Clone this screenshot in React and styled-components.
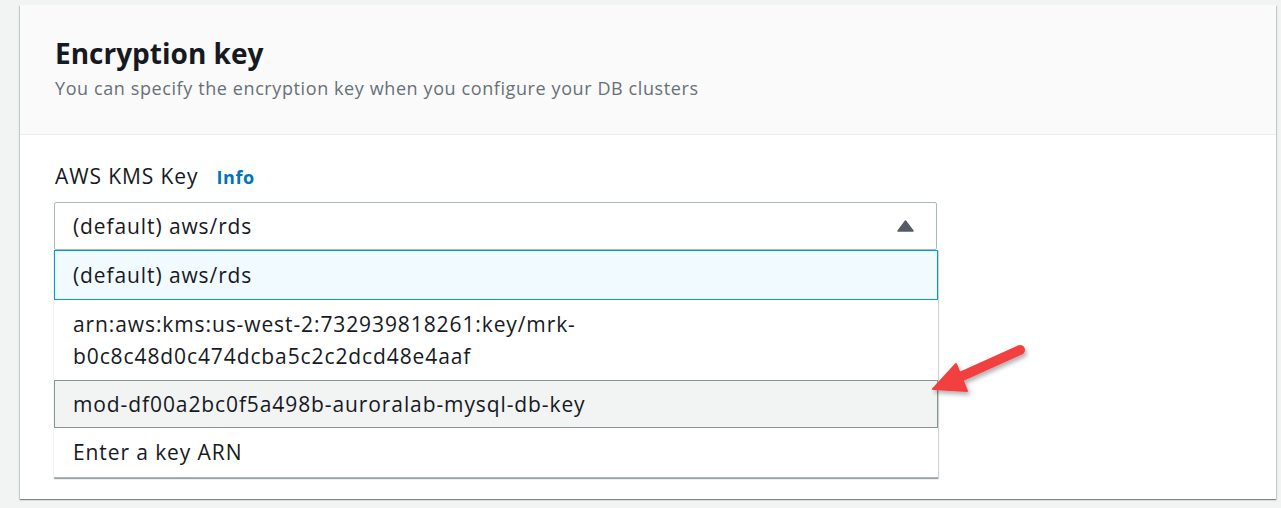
import React from 'react';
import styled, { createGlobalStyle } from 'styled-components';

const GlobalStyle = createGlobalStyle`
    html, body {
        margin: 0;
        padding: 0;
        background: #f2f3f3;
        font-family: "Open Sans", "Noto Sans", Arial, sans-serif;
        color: #16191f;
    }
`

const Page = styled.div`
    position: relative;
    padding: 5px 5px 9px 20px;
`

const Card = styled.div`
    background: white;
    box-shadow: 0 1px 1px 0 rgba(0,28,36,.3), 1px 1px 1px 0 rgba(0,28,36,.15), -1px 1px 1px 0 rgba(0,28,36,.15);
`

const Header = styled.div`
    background: #fafafa;
    border-bottom: 1px solid #eaeded;
    padding: 32px 35px 0 35px;
    height: 97px;
`

const Title = styled.h2`
    margin: 0;
    font-size: 28px;
    font-weight: 700;
    line-height: 32px;
`

const Description = styled.p`
    margin: 4px 0 0;
    font-size: 18px;
    letter-spacing: 0.6px;
    line-height: 30px;
    color: #687078;
`

const Body = styled.div`
    padding: 27px 35px 21px 34px;
`

const LabelRow = styled.div`
    display: flex;
    align-items: baseline;
    gap: 18px;
    height: 40px;
    padding-left: 1px;
    font-size: 21px;
    letter-spacing: 0.9px;
    line-height: 29px;
`

const InfoLink = styled.span`
    color: #0073bb;
    font-weight: 700;
    font-size: 18px;
    letter-spacing: 0.6px;
`

const Select = styled.div`
    width: 883px;
    box-sizing: border-box;
    height: 48px;
    border: 1px solid #aab7b8;
    border-radius: 2px;
    display: flex;
    align-items: center;
    justify-content: space-between;
    padding: 0 22px 0 18px;
    font-size: 21px;
    letter-spacing: 0.9px;
`

const Menu = styled.ul`
    list-style: none;
    margin: 0;
    padding: 0;
    width: 884px;
    box-sizing: border-box;
    background: white;
    border: 1px solid #aab7b8;
    border-top: none;
    box-shadow: 0 1px 1px 0 rgba(0,28,36,.3), 1px 1px 1px 0 rgba(0,28,36,.15);
`

const Option = styled.li`
    box-sizing: border-box;
    padding: 7px 18px;
    font-size: 21px;
    letter-spacing: 0.9px;
    line-height: 32px;
    border: 1px solid ${p => p.$selected ? '#00a1c9' : p.$hover ? '#879596' : 'transparent'};
    background: ${p => p.$selected ? '#f1faff' : p.$hover ? '#f2f3f3' : 'white'};
    margin: 0 -1px;

    &:first-child {
        padding: 8px 18px;
    }

    &:last-child {
        padding-bottom: 8px;
    }
`

const Caret = () => (
    <svg width="17" height="12" viewBox="0 0 17 12">
        <path d="M8.5 1 L16 11 L1 11 Z" fill="#545b64" stroke="#545b64" strokeWidth="1.5" strokeLinejoin="round" />
    </svg>
)

const ArrowMark = styled.svg`
    position: absolute;
    left: 920px;
    top: 338px;
    overflow: visible;
`

const Arrow = () => (
    <ArrowMark width="120" height="70" viewBox="0 0 120 70">
        <defs>
            <filter id="sh" x="-20%" y="-20%" width="150%" height="160%">
                <feDropShadow dx="2" dy="3" stdDeviation="2" floodColor="#000" floodOpacity="0.3" />
            </filter>
        </defs>
        <g filter="url(#sh)" fill="#f24141" stroke="#f24141">
            <line x1="100" y1="12" x2="40" y2="39" strokeWidth="10" strokeLinecap="round" />
            <path d="M13 51 L36 26 L47 53 Z" strokeWidth="2" strokeLinejoin="round" />
        </g>
    </ArrowMark>
)

const options = [
    { label: '(default) aws/rds', selected: true },
    { label: <>arn:aws:kms:us-west-2:732939818261:key/mrk-<br />b0c8c48d0c474dcba5c2c2dcd48e4aaf</> },
    { label: 'mod-df00a2bc0f5a498b-auroralab-mysql-db-key', hover: true },
    { label: 'Enter a key ARN' },
]

export default function App() {
    return (
        <Page>
            <GlobalStyle />
            <Card>
                <Header>
                    <Title>Encryption key</Title>
                    <Description>You can specify the encryption key when you configure your DB clusters</Description>
                </Header>
                <Body>
                    <LabelRow>
                        AWS KMS Key <InfoLink>Info</InfoLink>
                    </LabelRow>
                    <Select>
                        <span>(default) aws/rds</span>
                        <Caret />
                    </Select>
                    <Menu>
                        {options.map((o, i) => (
                            <Option key={i} $selected={o.selected} $hover={o.hover}>{o.label}</Option>
                        ))}
                    </Menu>
                </Body>
            </Card>
            <Arrow />
        </Page>
    )
}
